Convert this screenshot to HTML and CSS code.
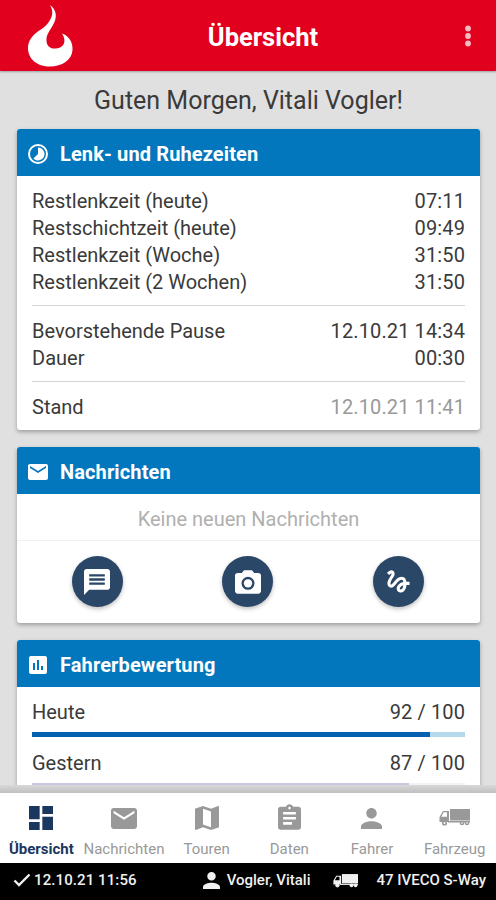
FILE: index.html
```
<!DOCTYPE html>
<html lang="de">
<head>
  <meta charset="UTF-8">
  <meta name="viewport" content="width=device-width, initial-scale=1">
  <title>Übersicht</title>
  <link rel="stylesheet" href="styles.css">
</head>
<body>

  <!-- Icons, die mehrfach vorkommen -->
  <svg class="sprite">
    <symbol id="mail" viewBox="2 4 20 16">
      <path d="M20 4H4c-1.1 0-2 .9-2 2v12c0 1.1.9 2 2 2h16c1.1 0 2-.9 2-2V6c0-1.1-.9-2-2-2zm0 4l-8 5-8-5V6l8 5 8-5v2z"/>
    </symbol>
    <symbol id="person" viewBox="4 4 16 16">
      <path d="M12 12c2.2 0 4-1.8 4-4s-1.8-4-4-4-4 1.8-4 4 1.8 4 4 4zm0 2c-2.7 0-8 1.3-8 4v2h16v-2c0-2.7-5.3-4-8-4z"/>
    </symbol>
    <symbol id="truck" viewBox="0 0 31 18">
      <path d="M11 1h20v11.500H11z"/>
      <path fill-rule="evenodd" d="M4 3h6v11H.5V9zM4.700 4.300L2.300 8.800H8V4.300z"/>
      <path d="M9 13h22v1.500H9z"/>
      <circle cx="5.500" cy="15" r="2.600"/>
      <circle cx="23" cy="15" r="2.300"/>
      <circle cx="28" cy="15" r="2.300"/>
      <circle class="hub" cx="5.500" cy="15" r="1"/>
      <circle class="hub" cx="23" cy="15" r=".8"/>
      <circle class="hub" cx="28" cy="15" r=".8"/>
    </symbol>
  </svg>

  <header class="topbar">
    <svg class="logo" viewBox="0 0 46 62">
      <path d="M22 0C25 5 25 10 22 15C18 22 13 24 8 28C3 32 0 37 0 43C0 54 9 61.500 22 61.500C34 61.500 44 55 44.500 45C45 37 41 31 34 28.500C39 36 36 43 28 43.500C23 44 19 42 18.500 36C18 29 22 26 25 20C30 12 28 4 22 0Z"/>
    </svg>
    <h1>Übersicht</h1>
    <svg class="more" viewBox="0 0 6 22">
      <circle cx="3" cy="3.500" r="2.900"/>
      <circle cx="3" cy="11" r="2.900"/>
      <circle cx="3" cy="18.500" r="2.900"/>
    </svg>
  </header>

  <main class="content">
    <p class="greeting">Guten Morgen, Vitali Vogler!</p>

    <section class="card">
      <h2 class="card-title">
        <svg class="icon-time" viewBox="2 2 20 20">
          <circle cx="12" cy="12" r="9" fill="none" stroke="currentColor" stroke-width="2"/>
          <path d="M12 5.500a6.500 6.500 0 1 1-4.600 11.100L12 12z"/>
        </svg>
        <span>Lenk- und Ruhezeiten</span>
      </h2>
      <div class="times">
        <div class="group">
          <div class="row"><span>Restlenkzeit (heute)</span><span class="value">07:11</span></div>
          <div class="row"><span>Restschichtzeit (heute)</span><span class="value">09:49</span></div>
          <div class="row"><span>Restlenkzeit (Woche)</span><span class="value">31:50</span></div>
          <div class="row"><span>Restlenkzeit (2 Wochen)</span><span class="value">31:50</span></div>
        </div>
        <div class="group">
          <div class="row"><span>Bevorstehende Pause</span><span class="value">12.10.21 14:34</span></div>
          <div class="row"><span>Dauer</span><span class="value">00:30</span></div>
        </div>
        <div class="group">
          <div class="row"><span>Stand</span><span class="value muted">12.10.21 11:41</span></div>
        </div>
      </div>
    </section>

    <section class="card">
      <h2 class="card-title">
        <svg class="icon-mail"><use href="#mail"/></svg>
        <span>Nachrichten</span>
      </h2>
      <p class="empty">Keine neuen Nachrichten</p>
      <div class="actions">
        <button class="round">
          <svg class="icon-chat" viewBox="2 2 20 20"><path d="M20 2H4c-1.100 0-2 .9-2 2v18l4-4h14c1.100 0 2-.9 2-2V4c0-1.100-.9-2-2-2zM6 6h12v1.800H6zm0 3.200h12V11H6zm0 3.200h12v1.800H6z"/></svg>
        </button>
        <button class="round">
          <svg class="icon-camera" viewBox="2 2 20 18"><path fill-rule="evenodd" d="M9 2L7.200 4H4c-1.100 0-2 .9-2 2v12c0 1.100.9 2 2 2h16c1.100 0 2-.9 2-2V6c0-1.100-.9-2-2-2h-3.200L15 2H9zm3 15a5 5 0 1 1 0-10 5 5 0 0 1 0 10z"/><circle cx="12" cy="12" r="3.200"/></svg>
        </button>
        <button class="round">
          <svg class="icon-sign" viewBox="2 2 21 21"><path d="M4.590 6.890c.7-.71 1.400-1.350 1.710-1.220.5.200 0 1.030-.3 1.520-.25.420-2.860 3.890-2.860 6.310 0 1.280.48 2.340 1.340 2.980.75.560 1.740.73 2.640.46 1.070-.31 1.950-1.400 3.060-2.770 1.210-1.490 2.830-3.440 4.080-3.440 1.630 0 1.650 1.010 1.760 1.790-3.780.64-5.380 3.670-5.380 5.370s1.440 3.090 3.210 3.090c1.630 0 4.290-1.330 4.690-6.100H21v-2.500h-2.470c-.15-1.650-1.090-4.200-4.030-4.200-2.250 0-4.180 1.910-4.940 2.840-.58.730-2.060 2.480-2.290 2.720-.25.300-.68.840-1.110.84-.45 0-.72-.83-.36-1.920.35-1.090 1.400-2.860 1.850-3.520.78-1.140 1.300-1.920 1.300-3.280C8.950 3.690 7.310 3 6.440 3 5.120 3 3.970 4 3.720 4.250c-.36.360-.66.660-.88.930l1.750 1.710zm9.290 11.660c-.31 0-.74-.26-.74-.72 0-.6.730-2.200 2.870-2.760-.3 2.690-1.430 3.480-2.130 3.480z"/></svg>
        </button>
      </div>
    </section>

    <section class="card">
      <h2 class="card-title">
        <svg class="icon-chart" viewBox="3 3 18 18"><path d="M19 3H5c-1.100 0-2 .9-2 2v14c0 1.100.9 2 2 2h14c1.100 0 2-.9 2-2V5c0-1.100-.9-2-2-2zM9 17H7v-7h2v7zm4 0h-2V7h2v10zm4 0h-2v-4h2v4z"/></svg>
        <span>Fahrerbewertung</span>
      </h2>
      <div class="ratings">
        <div class="row"><span>Heute</span><span class="value">92 / 100</span></div>
        <div class="bar"><div class="bar-fill" style="width: 92%"></div></div>
        <div class="row"><span>Gestern</span><span class="value">87 / 100</span></div>
        <div class="bar bar-pale"><div class="bar-fill" style="width: 87%"></div></div>
      </div>
    </section>
  </main>

  <nav class="tabs">
    <a class="tab active">
      <svg class="tab-grid" viewBox="3 3 18 18"><path d="M3 13h8V3H3v10zm0 8h8v-6H3v6zm10 0h8V11h-8v10zm0-18v6h8V3h-8z"/></svg>
      <span>Übersicht</span>
    </a>
    <a class="tab">
      <svg class="tab-mail"><use href="#mail"/></svg>
      <span>Nachrichten</span>
    </a>
    <a class="tab">
      <svg class="tab-map" viewBox="3 3 18 18"><path d="M20.500 3l-.16.030L15 5.100 9 3 3.360 4.900c-.21.070-.36.250-.36.480V20.500c0 .28.220.5.500.5l.16-.03L9 18.900l6 2.100 5.640-1.900c.21-.07.360-.25.360-.48V3.500c0-.28-.22-.5-.5-.5zM15 19l-6-2.110V5l6 2.110V19z"/></svg>
      <span>Touren</span>
    </a>
    <a class="tab">
      <svg class="tab-data" viewBox="3 1 18 20"><path d="M19 3h-4.180C14.400 1.840 13.300 1 12 1c-1.300 0-2.400.84-2.820 2H5c-1.100 0-2 .9-2 2v14c0 1.100.9 2 2 2h14c1.100 0 2-.9 2-2V5c0-1.100-.9-2-2-2zm-7 0c.55 0 1 .45 1 1s-.45 1-1 1-1-.45-1-1 .45-1 1-1zm2 14H7v-2h7v2zm3-4H7v-2h10v2zm0-4H7V7h10v2z"/></svg>
      <span>Daten</span>
    </a>
    <a class="tab">
      <svg class="tab-person"><use href="#person"/></svg>
      <span>Fahrer</span>
    </a>
    <a class="tab">
      <svg class="tab-truck"><use href="#truck"/></svg>
      <span>Fahrzeug</span>
    </a>
  </nav>

  <footer class="status">
    <svg class="status-check" viewBox="0 0 18 14"><path d="M1.500 7.500L6 12 16.500 1.500"/></svg>
    <span class="status-time">12.10.21 11:56</span>
    <svg class="status-person"><use href="#person"/></svg>
    <span class="status-name">Vogler, Vitali</span>
    <svg class="status-truck"><use href="#truck"/></svg>
    <span class="status-vehicle">47 IVECO S-Way</span>
  </footer>

</body>
</html>
```
FILE: styles.css
```
* {
  margin: 0;
  padding: 0;
  box-sizing: border-box;
}

body {
  display: flex;
  flex-direction: column;
  height: 100vh;
  overflow: hidden;
  background: #e0e0e0;
  color: #3a3a3a;
  font-family: Roboto, sans-serif;
}

svg {
  display: block;
  flex: none;
  fill: currentColor;
}

.sprite {
  display: none;
}

/* Kopfzeile */
.topbar {
  display: grid;
  grid-template-columns: 82px 1fr 82px;
  flex: none;
  height: 71px;
  background: #e2001f;
  color: #fff;
  box-shadow: 0 1px 2px rgba(0, 0, 0, 0.3);
  z-index: 1;
}

.logo {
  width: 46px;
  height: 62px;
  margin: 5px 0 0 28px;
}

.topbar h1 {
  margin: 2px -30px 0 0;
  text-align: center;
  font-size: 25.5px;
  font-weight: 700;
  line-height: 70px;
}

.more {
  width: 6px;
  height: 22px;
  margin: 25px 0 0 51px;
  color: #f8bcc3;
}

/* Inhalt */
.content {
  flex: 1;
  min-height: 0;
  padding: 0 16px 0 17px;
  overflow: hidden;
}

.greeting {
  height: 58px;
  line-height: 59px;
  text-align: center;
  font-size: 25px;
}

.card {
  margin-bottom: 17px;
  border-radius: 3px;
  background: #fff;
  box-shadow: 0 2px 4px rgba(0, 0, 0, 0.3);
  overflow: hidden;
}

.card-title {
  display: flex;
  align-items: center;
  height: 47px;
  padding: 2px 11px 0;
  background: #0277bd;
  color: #fff;
  font-size: 20px;
  font-weight: 700;
  letter-spacing: 0.12px;
}

.card-title svg {
  margin-right: 12px;
}

.icon-time {
  width: 20px;
  height: 20px;
}

.icon-mail {
  width: 20px;
  height: 16px;
}

.card-title .icon-chart {
  width: 18px;
  height: 18px;
  margin: 0 13px 0 1px;
}

.row {
  display: flex;
  justify-content: space-between;
  font-size: 20px;
  line-height: 27px;
}

.value {
  letter-spacing: 0.12px;
}

.times {
  padding: 12px 15px 9px;
}

.group + .group {
  margin-top: 9px;
  padding-top: 12px;
  border-top: 1px solid #d4d4d4;
}

.muted {
  color: #999;
}

.empty {
  height: 47px;
  border-bottom: 1px solid #f0f0f0;
  line-height: 50px;
  text-align: center;
  color: #b0b0b0;
  font-size: 20px;
}

.actions {
  display: flex;
  justify-content: space-around;
  height: 82px;
  padding: 15px 6px 0 5px;
}

.round {
  display: flex;
  align-items: center;
  justify-content: center;
  width: 51px;
  height: 51px;
  border: none;
  border-radius: 50%;
  background: #2b4767;
  color: #fff;
  box-shadow: 0 2px 4px rgba(0, 0, 0, 0.25);
}

.icon-chat {
  width: 26px;
  height: 26px;
}

.icon-camera {
  width: 26px;
  height: 24px;
}

.icon-sign {
  width: 26px;
  height: 26px;
}

.ratings {
  padding: 12px 15px 20px;
}

.bar {
  height: 5px;
  margin: 6px 0 13px;
  background: #b3d9ea;
}

.bar-fill {
  height: 100%;
  background: #0560b0;
}

.bar-pale {
  background: #f0f3f5;
}

.bar-pale .bar-fill {
  background: #c8c9e0;
}

/* Navigation unten */
.tabs {
  display: grid;
  grid-template-columns: repeat(6, 1fr);
  flex: none;
  height: 78px;
  padding-top: 8px;
  background: linear-gradient(#d8d8d8, #c0c0c0 8px, #fff 8px);
}

.tab {
  display: grid;
  grid-template-rows: 50px 20px;
  justify-items: center;
  align-items: center;
  justify-content: center;
  color: #999;
  font-size: 15px;
  line-height: 12px;
  white-space: nowrap;
}

.tab span {
  align-self: start;
}

.tab.active {
  color: #1b365f;
  font-weight: 700;
}

.tab-grid,
.tab-map {
  width: 24px;
  height: 24px;
}

.tab-mail {
  width: 26px;
  height: 21px;
}

.tab-data {
  width: 23px;
  height: 26px;
  margin-top: -3px;
}

.tab-person {
  width: 21px;
  height: 21px;
}

.tab-truck {
  width: 31px;
  height: 18px;
  margin-top: -2px;
}

.hub {
  fill: #fff;
}

/* Statuszeile */
.status {
  display: flex;
  align-items: center;
  flex: none;
  height: 37px;
  padding: 0 10px 3px 13px;
  background: #000;
  color: #f0f0f0;
  font-size: 15px;
  font-weight: 500;
  white-space: nowrap;
}

.status-check {
  width: 18px;
  height: 14px;
  margin-right: 3px;
  fill: none;
  stroke: currentColor;
  stroke-width: 2.4;
}

.status-time {
  letter-spacing: 0.1px;
}

.status-person {
  width: 17px;
  height: 17px;
  margin: 0 7px 0 auto;
}

.status-truck {
  width: 25px;
  height: 15px;
  margin: 0 18px 0 23px;
}
```
